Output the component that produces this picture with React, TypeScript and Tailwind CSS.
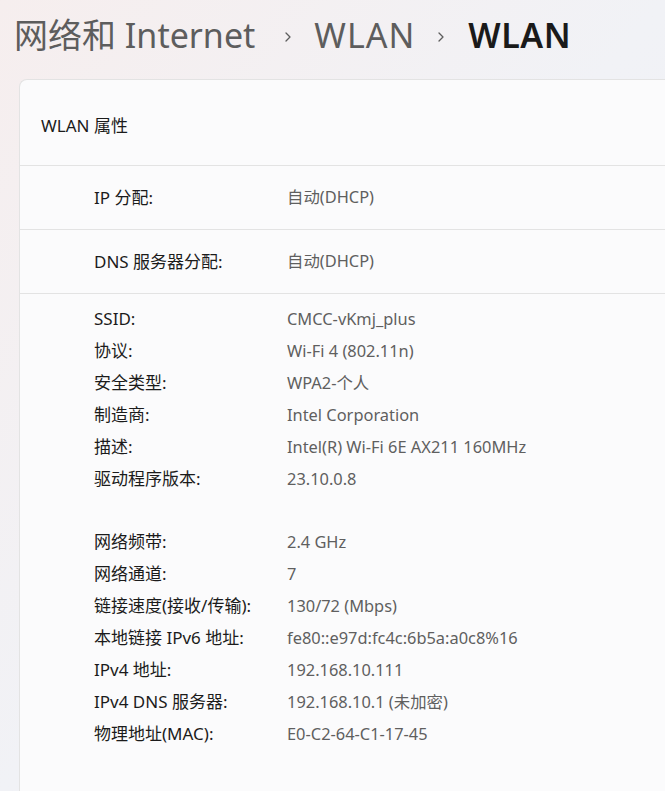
import React from 'react'

const font = { fontFamily: '"Noto Sans", "Noto Sans CJK SC", sans-serif' }

const topRows = [
  { label: 'IP 分配:', value: '自动(DHCP)' },
  { label: 'DNS 服务器分配:', value: '自动(DHCP)' },
]

const group1 = [
  ['SSID:', 'CMCC-vKmj_plus'],
  ['协议:', 'Wi-Fi 4 (802.11n)'],
  ['安全类型:', 'WPA2-个人'],
  ['制造商:', 'Intel Corporation'],
  ['描述:', 'Intel(R) Wi-Fi 6E AX211 160MHz'],
  ['驱动程序版本:', '23.10.0.8'],
]

const group2 = [
  ['网络频带:', '2.4 GHz'],
  ['网络通道:', '7'],
  ['链接速度(接收/传输):', '130/72 (Mbps)'],
  ['本地链接 IPv6 地址:', 'fe80::e97d:fc4c:6b5a:a0c8%16'],
  ['IPv4 地址:', '192.168.10.111'],
  ['IPv4 DNS 服务器:', '192.168.10.1 (未加密)'],
  ['物理地址(MAC):', 'E0-C2-64-C1-17-45'],
]

const Chevron = ({ className }: { className: string }) => (
  <svg width="14" height="14" viewBox="0 0 14 14" className={`mt-1 ${className}`}>
    <path d="M5 3 L9 7 L5 11" fill="none" stroke="#5d5d5d" strokeWidth="1.3" strokeLinecap="round" strokeLinejoin="round" />
  </svg>
)

const InfoRow = ({ label, value }: { label: string; value: string }) => (
  <div className="flex h-8 items-center">
    <div className="w-[193px] text-[#1b1b1b]">{label}</div>
    <div className="text-[#5f5f5f] text-[16.4px]">{value}</div>
  </div>
)

export default function App() {
  return (
    <div
      style={font}
      className="h-[791px] w-full overflow-hidden flex flex-col bg-linear-to-br from-[#f6eeee] via-[#f1f2f6] to-[#eef1f8]"
    >
      {/* Заголовок-хлебные крошки */}
      <div className="flex items-center h-[40px] mt-[15px] pl-[14px] text-[34px] leading-none whitespace-nowrap">
        <span className="text-[#5d5d5d]">网络和 Internet</span>
        <Chevron className="ml-[26px] mr-[19px]" />
        <span className="text-[#5d5d5d] tracking-[1px]">WLAN</span>
        <Chevron className="ml-[19px] mr-[20px]" />
        <span className="text-[#1a1a1a] font-semibold tracking-[0.5px]">WLAN</span>
      </div>

      {/* Карточка свойств */}
      <div className="flex-1 ml-[19px] mt-[24px] mr-[-12px] bg-[#fbfbfc] border-l border-t border-[#e3e3e3] rounded-tl-lg text-[17px]">
        <div className="h-[85px] pl-[21px] pt-[34px] leading-6 text-[#1b1b1b]">WLAN 属性</div>

        {topRows.map(r => (
          <div key={r.label} className="h-16 flex items-center pl-[74px] border-t border-[#e3e3e3]">
            <div className="w-[193px] text-[#1b1b1b]">{r.label}</div>
            <div className="text-[#5f5f5f] text-[16.4px]">{r.value}</div>
          </div>
        ))}

        <div className="border-t border-[#e3e3e3] pl-[74px] pt-[9px]">
          {group1.map(([l, v]) => (
            <InfoRow key={l} label={l} value={v} />
          ))}
          <div className="h-[31px]" />
          {group2.map(([l, v]) => (
            <InfoRow key={l} label={l} value={v} />
          ))}
        </div>
      </div>
    </div>
  )
}
